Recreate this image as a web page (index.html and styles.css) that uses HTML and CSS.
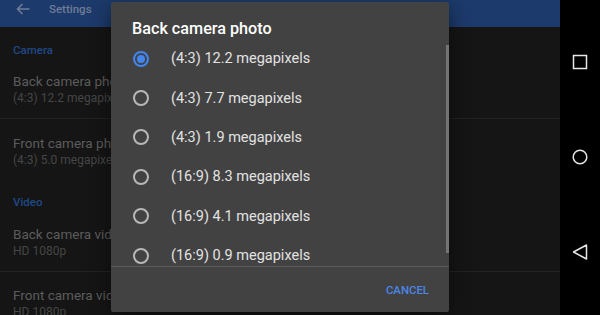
FILE: index.html
```html
<!DOCTYPE html>
<html lang="en">
<head>
    <meta charset="UTF-8">
    <meta name="viewport" content="width=device-width, initial-scale=1.0">
    <title>Settings</title>
    <link rel="stylesheet" href="styles.css">
</head>
<body>
    <div class="app">
        <header class="app-bar">
            <svg class="back-icon" width="14" height="12" viewBox="0 0 14 12">
                <path d="M13.5 6H1.5M6.5 1L1.5 6l5 5" fill="none" stroke="currentColor" stroke-width="1.6"/>
            </svg>
            <h1>Settings</h1>
        </header>

        <!-- Settings list (dimmed behind the dialog) -->
        <div class="settings">
            <div class="group-title first">Camera</div>
            <div class="pref pref-a">
                <div class="pref-title">Back camera photo</div>
                <div class="pref-summary">(4:3) 12.2 megapixels</div>
            </div>
            <div class="pref pref-b">
                <div class="pref-title">Front camera photo</div>
                <div class="pref-summary">(4:3) 5.0 megapixels</div>
            </div>
            <div class="group-title">Video</div>
            <div class="pref pref-c">
                <div class="pref-title">Back camera video</div>
                <div class="pref-summary">HD 1080p</div>
            </div>
            <div class="pref pref-d">
                <div class="pref-title">Front camera video</div>
                <div class="pref-summary">HD 1080p</div>
            </div>
        </div>

        <!-- Dialog -->
        <div class="dialog">
            <h2>Back camera photo</h2>
            <ul class="choices">
                <li class="checked"><span class="radio"></span>(4:3) 12.2 megapixels</li>
                <li><span class="radio"></span>(4:3) 7.7 megapixels</li>
                <li><span class="radio"></span>(4:3) 1.9 megapixels</li>
                <li><span class="radio"></span>(16:9) 8.3 megapixels</li>
                <li><span class="radio"></span>(16:9) 4.1 megapixels</li>
                <li><span class="radio"></span>(16:9) 0.9 megapixels</li>
            </ul>
            <div class="scrollbar"></div>
            <div class="actions">
                <button class="text-btn">CANCEL</button>
            </div>
        </div>
    </div>

    <nav class="nav-bar">
        <svg width="16" height="16" viewBox="0 0 16 16">
            <rect x="1.5" y="1.5" width="13" height="13" fill="none" stroke="currentColor" stroke-width="1.5"/>
        </svg>
        <svg width="16" height="16" viewBox="0 0 16 16">
            <circle cx="8" cy="8" r="6.8" fill="none" stroke="currentColor" stroke-width="1.5"/>
        </svg>
        <svg width="16" height="16" viewBox="0 0 16 16">
            <path d="M14.5 1v14L1.5 8z" fill="none" stroke="currentColor" stroke-width="1.5" stroke-linejoin="round"/>
        </svg>
    </nav>
</body>
</html>
```

FILE: styles.css
```css
body {
    margin: 0;
    width: 600px;
    height: 315px;
    overflow: hidden;
    display: flex;
    background-color: #000;
    font-family: Roboto, "Noto Sans", sans-serif;
}

.app {
    position: relative;
    width: 560px;
    height: 315px;
    background-color: #151515;
    overflow: hidden;
}

.app-bar {
    height: 27px;
    background-color: #1c3a6b;
    display: flex;
    align-items: center;
    padding-left: 16px;
    padding-bottom: 9px;
    box-sizing: border-box;
    color: #6e7c96;
}

.back-icon {
    display: block;
}

.app-bar h1 {
    margin: 0 0 0 19px;
    font-size: 11.5px;
    font-weight: 500;
    line-height: 16px;
}

.settings {
    display: flex;
    flex-direction: column;
}

.group-title {
    padding: 13px 13px 0;
    line-height: 16px;
    font-size: 11.5px;
    font-weight: 500;
    color: #1f4987;
}

.group-title.first {
    padding-top: 15px;
    height: 22px;
}

.pref {
    padding: 0 13px;
}

.pref-a {
    padding-top: 8px;
    height: 46px;
    border-bottom: 1px solid #222;
}

.pref-b {
    padding-top: 15px;
    padding-bottom: 13px;
}

.pref-c {
    padding-top: 15px;
    padding-bottom: 12px;
    border-bottom: 1px solid #222;
}

.pref-d {
    padding-top: 14px;
}

.pref-title {
    font-size: 13.5px;
    line-height: 18px;
    color: #5c5c5c;
    white-space: nowrap;
}

.pref-summary {
    font-size: 12px;
    line-height: 16px;
    color: #464646;
    white-space: nowrap;
}

.dialog {
    position: absolute;
    left: 111px;
    top: 2px;
    width: 338px;
    height: 310px;
    background-color: #424242;
    border-radius: 2px;
    box-shadow: 0 6px 20px rgba(0, 0, 0, 0.5);
    display: flex;
    flex-direction: column;
}

.dialog h2 {
    margin: 0;
    padding: 17px 21px 0;
    font-size: 16.2px;
    font-weight: 500;
    line-height: 20px;
    color: #fff;
}

.choices {
    list-style: none;
    margin: 0;
    padding: 0;
    height: 227px;
    overflow: hidden;
    border-bottom: 1px solid #5a5a5a;
}

.choices li {
    height: 39.4px;
    display: flex;
    align-items: center;
    padding-left: 22px;
    font-size: 14.5px;
    color: #e2e2e2;
    white-space: nowrap;
}

.radio {
    width: 16px;
    height: 16px;
    box-sizing: border-box;
    border: 2px solid #b8b8b8;
    border-radius: 50%;
    margin-right: 22px;
    display: flex;
    align-items: center;
    justify-content: center;
}

.checked .radio {
    border-color: #4285f4;
}

.checked .radio::after {
    content: "";
    width: 8px;
    height: 8px;
    border-radius: 50%;
    background-color: #4285f4;
}

.scrollbar {
    position: absolute;
    right: 0;
    top: 43px;
    width: 3px;
    height: 208px;
    background-color: #747474;
}

.actions {
    flex: 1;
    display: flex;
    align-items: center;
    justify-content: flex-end;
    padding-right: 20px;
}

.text-btn {
    background: none;
    border: none;
    padding: 0;
    font-family: inherit;
    font-size: 11.4px;
    font-weight: 500;
    color: #4a86e8;
    cursor: pointer;
}

.nav-bar {
    width: 40px;
    display: flex;
    flex-direction: column;
    align-items: center;
    padding-top: 54px;
    gap: 79px;
    color: #e6e6e6;
}

.nav-bar svg {
    display: block;
}
```
